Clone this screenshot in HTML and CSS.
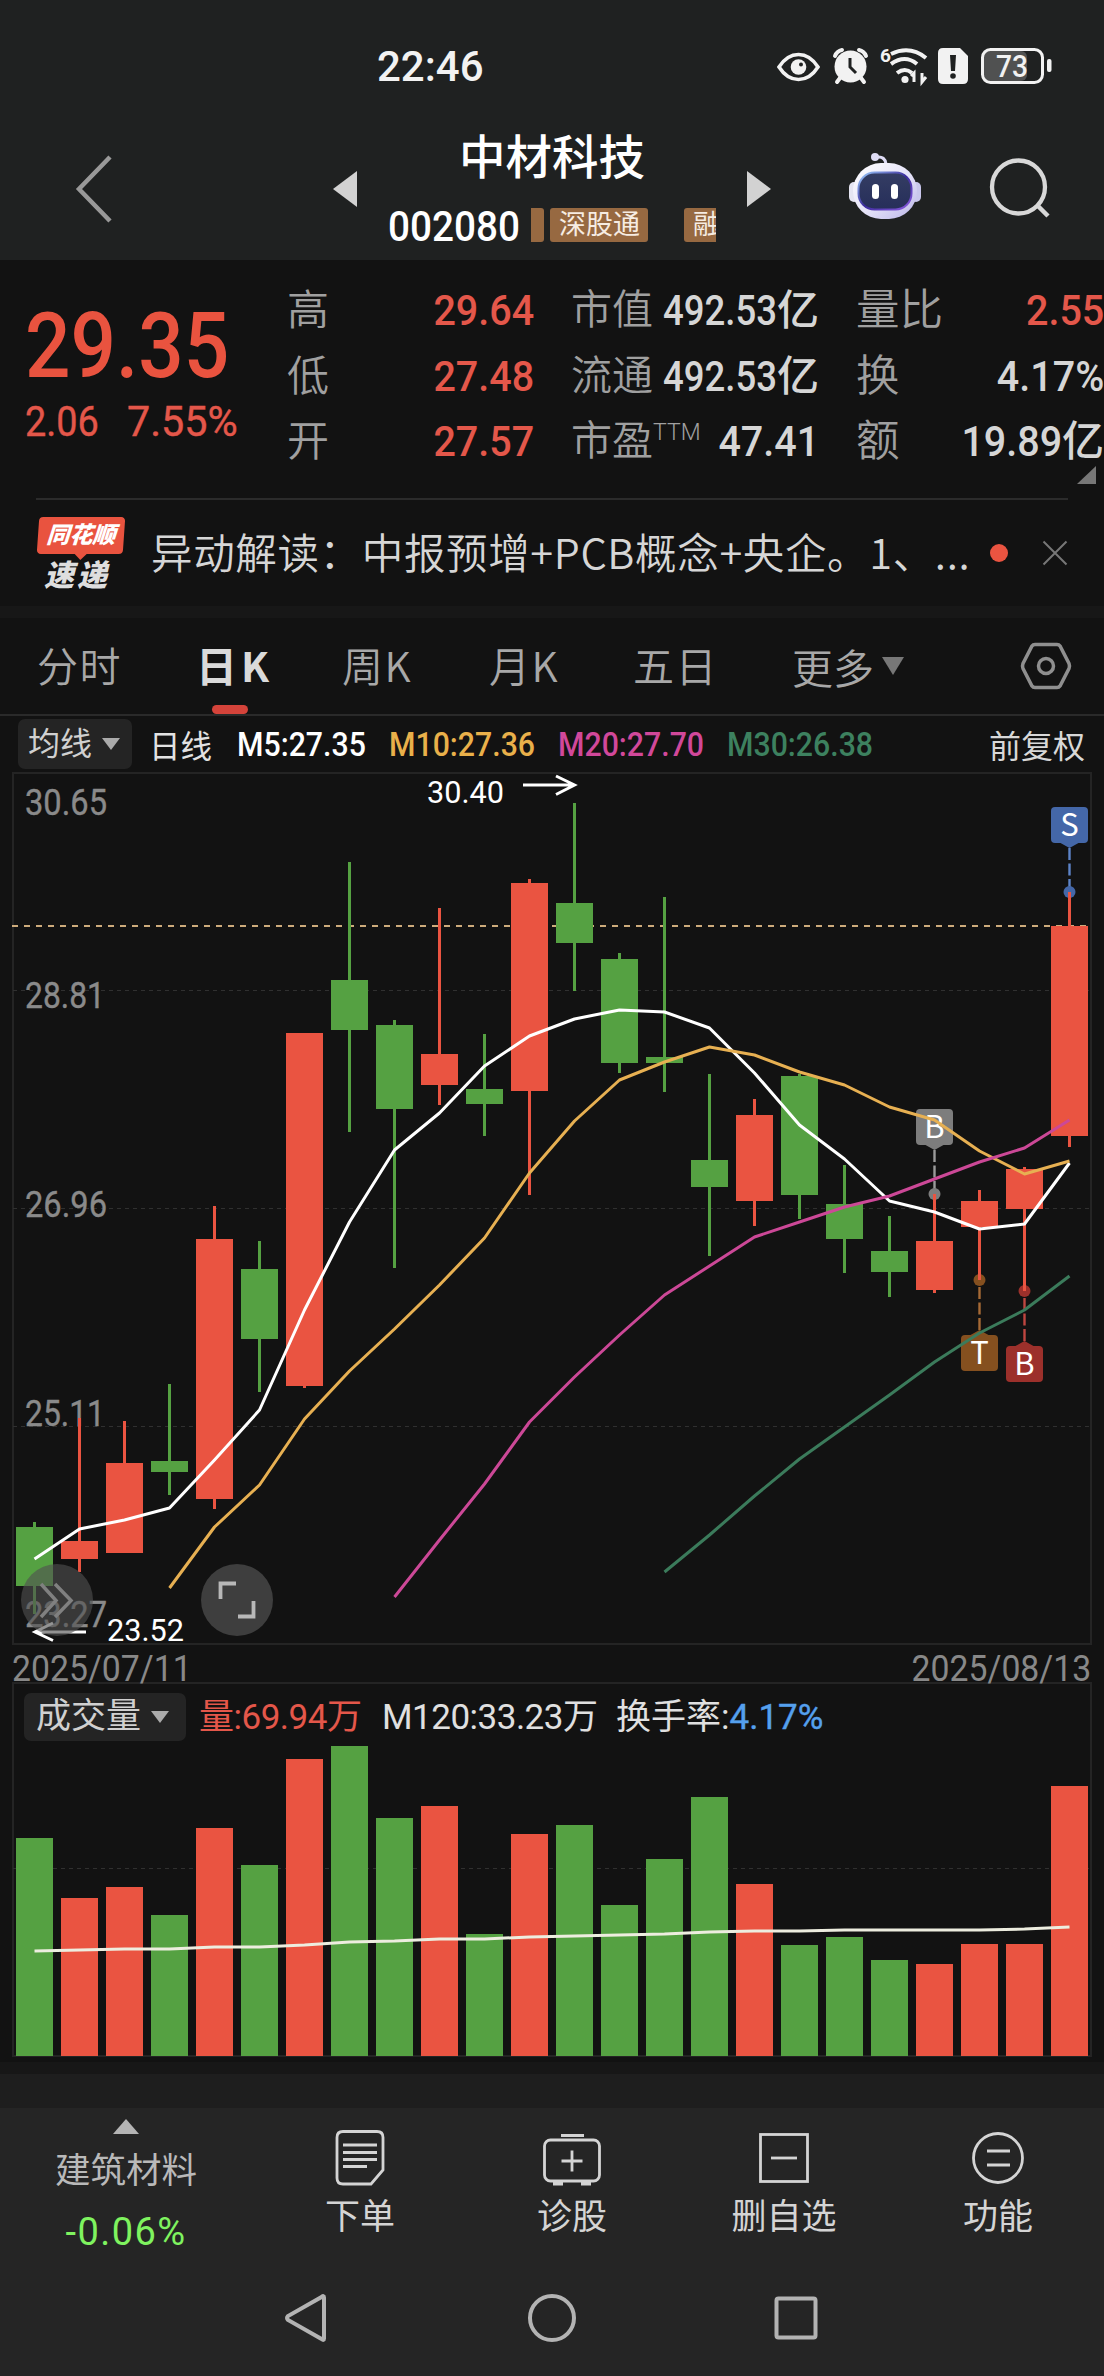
FILE: index.html
```html
<!DOCTYPE html>
<html lang="zh-CN">
<head>
<meta charset="utf-8">
<title>中材科技 002080</title>
<link rel="stylesheet" href="styles.css">
</head>
<body>
<header class="top">
  <div class="status">
    <time class="clock">22:46</time>
    <svg class="status-icons" width="278" height="44" viewBox="774 44 278 44">
      <path d="M779 67Q787 54.500 798.500 54.500T818 67Q810 79.500 798.500 79.500T779 67Z" fill="none" stroke="#f2f2f2" stroke-width="3.600"/>
      <circle cx="798.500" cy="67" r="7.800" fill="#f2f2f2"/><circle cx="801" cy="64.500" r="2" fill="#1f2121"/>
      <g stroke="#f2f2f2" stroke-width="4" stroke-linecap="round" fill="none"><path d="M840 78l-3 4M861 78l3 4M835 56q2-5 7-6M866 56q-2-5-7-6"/></g>
      <circle cx="850.500" cy="66.500" r="16" fill="#f2f2f2"/><path d="M850 58v9l6 6" fill="none" stroke="#1f2121" stroke-width="3"/>
      <text x="880" y="62" class="tiny">6</text>
      <g fill="none" stroke="#f2f2f2" stroke-width="4"><path d="M891 54q19-9 35 4M891 64q14-10 26 0M897 73q8-6 15 0"/><path d="M914 82v-9l-3 3M922 73v9l4-5" stroke-width="3"/></g>
      <circle cx="905" cy="79.500" r="3.600" fill="#f2f2f2"/>
      <path d="M943 48h17l8 8v23q0 5-5 5h-20q-5 0-5-5V53q0-5 5-5z" fill="#f2f2f2"/>
      <path d="M950 55h6l-1 16h-4z" fill="#1f2121"/><circle cx="953" cy="76" r="2.800" fill="#1f2121"/>
      <rect x="984" y="51" width="43" height="30" rx="6" fill="#505151"/>
      <rect x="982.500" y="49.500" width="60" height="33" rx="8" fill="none" stroke="#f2f2f2" stroke-width="3"/>
      <rect x="1047" y="59" width="4.500" height="13" rx="2" fill="#f2f2f2"/>
      <text x="996" y="77" class="batt" textLength="32" lengthAdjust="spacingAndGlyphs">73</text>
    </svg>
  </div>
  <div class="titlebar">
    <svg class="back" width="44" height="70" viewBox="0 0 44 70"><path d="M38 3L7 35l31 32" fill="none" stroke="#999" stroke-width="4.500"/></svg>
    <i class="prev"></i>
    <div class="stock">
      <h1>中材科技</h1>
      <div class="sub"><span class="code n">002080</span><div class="tags"><span class="tag stub"></span><span class="tag">深股通</span><span class="tag cut">融</span></div></div>
    </div>
    <i class="next"></i>
    <svg class="robot" width="76" height="70" viewBox="847 151 76 70">
      <defs>
        <linearGradient id="shell" x1="0" y1="0" x2="1" y2="1"><stop offset="0" stop-color="#fff"/><stop offset=".55" stop-color="#e4e2f8"/><stop offset="1" stop-color="#b9b4e8"/></linearGradient>
        <linearGradient id="face" x1="0" y1="0" x2="0" y2="1"><stop offset="0" stop-color="#343d63"/><stop offset="1" stop-color="#262e5a"/></linearGradient>
        <linearGradient id="rim" x1="0" y1="0" x2="1" y2="1"><stop offset="0" stop-color="#9fd0ff"/><stop offset=".5" stop-color="#3a2a9c"/><stop offset="1" stop-color="#8b5be0"/></linearGradient>
      </defs>
      <circle cx="875" cy="157" r="4" fill="#dedcf5"/><path d="M877 157q8-1 9 7" fill="none" stroke="#dedcf5" stroke-width="3"/>
      <rect x="849" y="182" width="10" height="20" rx="5" fill="#e5e5f2"/><rect x="911" y="182" width="10" height="20" rx="5" fill="#c9c7ec"/>
      <rect x="853" y="163" width="64" height="56" rx="28" fill="url(#shell)"/>
      <rect x="858.500" y="172.500" width="53" height="37" rx="16" fill="url(#face)" stroke="url(#rim)" stroke-width="2"/>
      <rect x="872" y="184" width="7" height="15" rx="3.500" fill="#fff"/><rect x="891" y="184" width="7" height="15" rx="3.500" fill="#fff"/>
    </svg>
    <svg class="search" width="64" height="64" viewBox="0 0 64 64"><circle cx="30.500" cy="30" r="26.500" fill="none" stroke="#d8d8d8" stroke-width="4.300"/><path d="M49 48l11 11" stroke="#d8d8d8" stroke-width="4.500"/></svg>
  </div>
</header>

<section class="quote">
  <div class="last">
    <strong class="n price">29.35</strong>
    <div class="chg"><span class="n">2.06</span><span class="n pct">7.55%</span></div>
  </div>
  <dl class="col c1">
    <div><dt>高</dt><dd class="up"><span class="n">29.64</span></dd></div>
    <div><dt>低</dt><dd class="up"><span class="n">27.48</span></dd></div>
    <div><dt>开</dt><dd class="up"><span class="n">27.57</span></dd></div>
  </dl>
  <dl class="col c2">
    <div><dt>市值</dt><dd><span class="n long">492.53</span>亿</dd></div>
    <div><dt>流通</dt><dd><span class="n long">492.53</span>亿</dd></div>
    <div><dt>市盈<sup>TTM</sup></dt><dd><span class="n">47.41</span></dd></div>
  </dl>
  <dl class="col c3">
    <div><dt>量比</dt><dd class="up"><span class="n">2.55</span></dd></div>
    <div><dt>换</dt><dd><span class="n">4.17%</span></dd></div>
    <div><dt>额</dt><dd><span class="n">19.89</span>亿</dd></div>
  </dl>
  <i class="corner"></i>
</section>

<section class="news">
  <div class="brand"><span class="flag">同花顺</span><span class="express">速递</span></div>
  <p>异动解读：中报预增+PCB概念+央企。1、<span class="dots">...</span></p>
  <i class="dot"></i>
  <svg class="close" width="26" height="26" viewBox="0 0 26 26"><path d="M1.500 1.500l23 23M24.500 1.500l-23 23" stroke="#777" stroke-width="2"/></svg>
</section>

<nav class="tabs">
  <a>分时</a><a class="on">日K</a><a>周K</a><a>月K</a><a>五日</a><a class="more">更多<i class="caret big"></i></a>
  <svg class="gear" width="52" height="50" viewBox="0 0 52 50"><g fill="none" stroke="#8f8f8f" stroke-width="3.500"><path d="M15 3.500h22q2 0 3 1.500l9 17.500q1 2.500 0 5L40 45q-1 1.500-3 1.500H15q-2 0-3-1.500L3 27.500q-1-2.500 0-5L12 5q1-1.500 3-1.500z"/><circle cx="26" cy="25" r="7.500"/></g></svg>
</nav>

<div class="legend">
  <span class="btn">均线<i class="caret"></i></span>
  <span class="daily">日线</span>
  <span class="n m5">M5:27.35</span><span class="n m10">M10:27.36</span><span class="n m20">M20:27.70</span><span class="n m30">M30:26.38</span>
  <span class="adj">前复权</span>
</div>

<main class="charts">
  <svg id="kline" class="kline" width="1104" height="912" viewBox="0 770 1104 912">
    <g class="frame"><rect x="13" y="773" width="1078" height="871"/></g>
    <path class="grid" d="M13 990.500H1091M13 1208.500H1091M13 1426.500H1091"/>
    <path class="now" d="M12 926H1088"/>
    <g class="axis">
      <text x="25" y="815" textLength="82" lengthAdjust="spacingAndGlyphs">30.65</text>
      <text x="25" y="1008" textLength="80" lengthAdjust="spacingAndGlyphs">28.81</text>
      <text x="25" y="1217" textLength="82" lengthAdjust="spacingAndGlyphs">26.96</text>
      <text x="25" y="1426" textLength="80" lengthAdjust="spacingAndGlyphs">25.11</text>
      <text x="25" y="1627" textLength="82" lengthAdjust="spacingAndGlyphs">23.27</text>
    </g>
    <g id="marks"></g>
    <g id="candles"></g>
    <g id="averages"></g>
    <g class="extreme">
      <text x="427" y="803" textLength="77" lengthAdjust="spacingAndGlyphs">30.40</text>
      <path d="M523 785H574M556 776L574.500 785L556 794.500"/>
      <text x="107" y="1641" textLength="77" lengthAdjust="spacingAndGlyphs">23.52</text>
      <path d="M35 1632H86M53 1623L35 1632L53 1640.500"/>
    </g>
    <circle cx="57" cy="1600" r="36" fill="#505050" opacity=".62"/>
    <path d="M41 1584l15 16.500l-15 16.500M55 1584l16 16.500l-16 16.500" fill="none" stroke="#808080" stroke-width="3.500"/>
    <circle cx="237" cy="1600" r="36" fill="#3e3e3e"/>
    <path d="M236 1583.500H220.500V1599M238 1616.500H253.500V1601" fill="none" stroke="#b8b8b8" stroke-width="3.800"/>
  </svg>
  <div class="dates"><span class="n">2025/07/11</span><span class="n">2025/08/13</span></div>
  <section class="volume">
    <div class="vol-head">
      <span class="btn">成交量<i class="caret"></i></span><span class="v-red">量:69.94万</span><span class="v-m">M120:33.23万</span><span class="v-turn">换手率:<b>4.17%</b></span>
    </div>
    <svg id="volume" class="bars" width="1104" height="316" viewBox="0 1742 1104 316"><path class="grid" d="M13 1868.500H1091"/></svg>
  </section>
</main>

<div class="gap"></div>

<footer>
  <div class="actions">
    <div class="sector"><i class="tri-up"></i><span>建筑材料</span><b>-0.06%</b></div>
    <div class="act"><svg width="60" height="60" viewBox="0 0 60 60"><path d="M13 3.500h34q6 0 6 6V42l-12 14H13q-6 0-6-6V9.500q0-6 6-6z"/><path d="M13 17h34M13 24.500h34M13 31.500h34M13 38.500h24"/></svg><span>下单</span></div>
    <div class="act"><svg width="60" height="60" viewBox="0 0 60 60"><rect x="2.500" y="12" width="55" height="41" rx="6"/><path d="M19 7.500h23M19.500 33h21M30 22.500v21"/><path d="M11 55.500h10M39 55.500h10" stroke-width="4"/></svg><span>诊股</span></div>
    <div class="act"><svg width="60" height="60" viewBox="0 0 60 60"><rect x="6.500" y="6.500" width="47" height="47"/><path d="M17 30h26"/></svg><span>删自选</span></div>
    <div class="act"><svg width="60" height="60" viewBox="0 0 60 60"><circle cx="30" cy="30" r="24.500"/><path d="M19 23h23M19 37h23"/></svg><span>功能</span></div>
  </div>
  <div class="sysnav">
    <svg width="46" height="54" viewBox="0 0 46 54"><path d="M41 6.500V47.500Q41 50 38.500 48L5 29Q3 27 5 25L38.500 6Q41 4 41 6.500z"/></svg>
    <svg width="52" height="52" viewBox="0 0 52 52"><circle cx="26" cy="26" r="22"/></svg>
    <svg width="48" height="48" viewBox="0 0 48 48"><rect x="4.500" y="4.500" width="39" height="39" rx="2"/></svg>
  </div>
</footer>
<script src="chart.js"></script>
</body>
</html>
```
FILE: styles.css
```css
* { box-sizing: border-box; }
body {
  margin: 0;
  width: 1104px;
  height: 2376px;
  overflow: hidden;
  background: #121212;
  color: #d6d6d6;
  font-family: Roboto, "Noto Sans CJK SC", sans-serif;
}
h1, p, dl, dd { margin: 0; }
i { display: block; flex: none; }
svg { display: block; flex: none; }
.n { display: inline-block; white-space: nowrap; transform: scaleX(.88); transform-origin: left center; }

.top { height: 260px; background: #1f2121; }
.status { height: 122px; display: flex; align-items: flex-start; padding-top: 44px; }
.clock { margin-left: 377px; width: 397px; font-size: 42px; font-weight: 500; line-height: 46px; color: #f2f2f2; }
.tiny { font-size: 19px; font-weight: 700; fill: #f2f2f2; }
.batt { font-size: 31px; font-weight: 500; fill: #f2f2f2; }
.titlebar { height: 138px; display: flex; align-items: flex-start; }
.back { margin: 32px 0 0 72px; }
.prev { margin: 49px 0 0 217px; border: solid transparent; border-width: 18px 24px 18px 0; border-right-color: #d2d2d2; }
.stock { width: 328px; margin: 0 31px; height: 122px; }
.stock h1 { font-size: 46.500px; font-weight: 500; line-height: 72px; height: 76px; text-align: center; color: #fff; }
.sub { display: flex; height: 46px; align-items: center; margin-top: 5px; }
.code { flex: none; width: 153px; margin-right: -10px; font-size: 43px; line-height: 46px; font-weight: 500; color: #fff; transform: scaleX(.9); }
.tags { display: flex; width: 186px; overflow: hidden; margin-top: -3px; }
.tag { flex: none; height: 34px; padding: 0 9px; font-size: 27px; line-height: 34px; color: #f6ece2; background: #976941; border-radius: 3px; width: 98px; white-space: nowrap; }
.tag.stub { width: 13px; padding: 0; margin-right: 6px; border-radius: 0 3px 3px 0; }
.tag.cut { margin-left: 36px; }
.next { margin-top: 49px; border: solid transparent; border-width: 18px 0 18px 24px; border-left-color: #d2d2d2; }
.robot { margin: 29px 0 0 76px; }
.search { margin: 35px 0 0 65px; }

.quote { position: relative; display: flex; height: 239px; }
.last { width: 287px; color: #e9533f; padding: 41px 0 0 25px; }
.price { font-size: 91px; line-height: 90px; font-weight: 500; }
.chg { display: flex; height: 50px; margin-top: 5px; font-size: 43px; line-height: 50px; }
.chg .n { width: 102px; color: #e4574a; -webkit-text-stroke: .4px; }
.chg .pct { transform: scaleX(.96); }
.col { padding-top: 18px; font-size: 42px; }
.col > div { display: flex; justify-content: space-between; height: 65.500px; line-height: 65px; white-space: nowrap; }
.col dt { color: #a0a0a0; font-weight: 350; }
.col dd { font-weight: 500; }
.col dd .n { transform-origin: right center; transform: scaleX(.94); }
.col dd .n.long { transform: scaleX(.87); margin-left: -20px; }
.col .up { color: #e4574a; }
.c1 { width: 247px; }
.c2 { width: 248px; margin-left: 37px; }
.c2 dt { font-size: 41px; }
.c3 { width: 248px; margin-left: 37px; }
.c3 dt { font-size: 43.500px; }
sup { font-size: 23px; line-height: 0; vertical-align: 15px; }
.corner { position: absolute; right: 8px; top: 206px; border: solid transparent; border-width: 0 0 18px 19px; border-bottom-color: #777; }

.news { height: 120px; margin: -1px 36px 0; position: relative; border-top: 2px solid #2b2b2b; display: flex; align-items: center; }
.news::after { content: ""; position: absolute; left: -36px; right: -36px; bottom: 0; height: 12px; background: #171717; }
.brand { width: 115px; align-self: flex-start; padding: 17px 0 0 2px; }
.brand span { display: block; font-weight: 900; white-space: nowrap; }
.flag { position: relative; width: 86px; height: 37px; background: #e9533f; border-radius: 4px; transform: skewX(-4deg); color: #fff; font-size: 23px; line-height: 37px; text-align: center; font-style: italic; }
.flag::after { content: ""; position: absolute; left: 37px; top: 36px; border: solid transparent; border-width: 7px 7px 0; border-top-color: #e9533f; }
.express { margin: 5px 0 0 6px; font-size: 30px; line-height: 34px; letter-spacing: 3px; font-style: italic; color: #dedede; }
.news p { width: 813px; font-size: 41.500px; line-height: 60px; letter-spacing: .65px; white-space: nowrap; font-weight: 350; margin-top: -16px; font-family: "Noto Sans CJK SC", sans-serif; display: flex; justify-content: space-between; }
.dot { width: 18px; height: 18px; border-radius: 50%; background: #ea5441; margin: -12px 0 0 26px; }
.close { margin: -12px 0 0 34px; }

.tabs { display: grid; grid-template-columns: 159px 146px 147px 144px 159px 228px 52px; height: 98px; padding-left: 37px; border-bottom: 2px solid #2a2a2a; align-items: center; font-family: "Noto Sans CJK SC", sans-serif; font-size: 41px; line-height: 93px; color: #a8a8a8; white-space: nowrap; }
.tabs a { height: 96px; font-weight: 350; letter-spacing: 1.500px; }
.tabs .on { position: relative; font-weight: 700; color: #dadada; letter-spacing: 4px; }
.tabs .on::after { content: ""; position: absolute; left: 16px; bottom: 0; width: 36px; height: 9px; border-radius: 5px; background: #d4433a; }
.tabs .more { display: flex; align-items: center; letter-spacing: 0; }
.caret { border: solid transparent; border-width: 12px 9px 0; border-top-color: #aaa; margin-left: 10px; }
.caret.big { border-width: 18px 11px 0; border-top-color: #777; margin-left: 8px; margin-top: -1px; }

.legend { display: flex; align-items: center; height: 54px; padding: 1px 0 0 18px; font-size: 34px; font-weight: 500; color: #fff; }
.btn { flex: none; display: flex; align-items: center; background: #242424; border-radius: 7px; color: #d0d0d0; font-weight: 400; white-space: nowrap; }
.legend .btn { width: 114px; height: 50px; padding-left: 10px; font-size: 32px; line-height: 50px; }
.daily { flex: none; width: 88px; margin-left: 17px; font-size: 31.500px; font-weight: 400; color: #e2e2e2; }
.legend .n { flex: none; width: 169px; transform: scaleX(.89); font-weight: 500; }
.legend .m5 { width: 152px; }
.m10 { color: #e9b04a; }
.m20 { color: #d1489a; }
.m30 { color: #3d815f; }
.legend .m30 { width: 262px; }
.adj { font-size: 32px; font-weight: 400; color: #d8d8d8; white-space: nowrap; }

.frame { fill: none; stroke: #242424; stroke-width: 2; }
.grid { fill: none; stroke: #303030; stroke-width: 1; stroke-dasharray: 4 4; }
.now { stroke: #cdab7c; stroke-width: 1.800; stroke-dasharray: 6 6; }
.axis { font-size: 36.500px; fill: #8a8a8a; stroke: #8a8a8a; stroke-width: .4; }
.extreme text { font-size: 32px; fill: #fff; }
.extreme path { fill: none; stroke: #fff; stroke-width: 3; }
.mark-label { font-family: "Noto Sans CJK SC", sans-serif; font-size: 31px; fill: #fff; text-anchor: middle; }
.line { fill: none; stroke-width: 3; stroke-linejoin: round; }

.kline { margin-bottom: -34px; }
.dates { position: relative; display: flex; justify-content: space-between; height: 34px; padding: 0 13px 0 12px; font-size: 36.500px; line-height: 42px; color: #888; }
.dates .n { transform: scaleX(.925); }
.dates .n:last-child { transform-origin: right center; }
.volume { width: 1080px; height: 375px; margin-left: 12px; border: 2px solid #242424; }
.vol-head { display: flex; align-items: flex-start; height: 58px; padding: 9px 0 0 10px; font-size: 35px; line-height: 49px; white-space: nowrap; }
.vol-head .btn { width: 162px; height: 48px; padding-left: 12px; line-height: 48px; }
.v-red { width: 183px; margin-left: 13px; color: #e4574a; letter-spacing: -.5px; }
.v-m { width: 234px; color: #e0e0e0; letter-spacing: -.5px; }
.v-turn { color: #e0e0e0; }
.v-turn b { font-weight: 400; color: #55a0ee; -webkit-text-stroke: .4px; }
.bars { margin-left: -14px; }

.gap { height: 51px; border-top: 5px solid #121212; background: linear-gradient(#171717 12px, #1e1e1e 12px); }
footer { height: 268px; background: #252525; }
.actions { display: grid; grid-template-columns: 252px 216px 208px 216px 212px; height: 158px; color: #d4d4d4; font-size: 35px; }
.sector { display: flex; flex-direction: column; align-items: center; color: #b9b9b9; font-size: 35.500px; line-height: 40px; padding-top: 11px; }
.tri-up { border: solid transparent; border-width: 0 13px 15px; border-bottom-color: #b4b4b4; margin-bottom: 17px; }
.sector b { font-weight: 400; color: #7ff35f; font-size: 38px; margin-top: 21px; letter-spacing: 1.400px; }
.act { display: flex; flex-direction: column; align-items: center; padding-top: 20px; line-height: 46px; }
.act svg { fill: none; stroke: #d4d4d4; stroke-width: 2.800; }
.act span { margin-top: 7px; }
.sysnav { display: flex; align-items: center; height: 104px; padding-left: 283px; }
.sysnav svg { fill: none; stroke: #b3b3b3; stroke-width: 4; }
.sysnav svg:nth-child(2) { margin-left: 197px; }
.sysnav svg:nth-child(3) { margin-left: 194px; }
```
FILE: chart.js
```js
const NS = 'http://www.w3.org/2000/svg';
const RED = '#ea5441', GREEN = '#55a142';
const x = i => 34.5 + 45 * i;

function add(parent, tag, attrs, text) {
  const el = document.createElementNS(NS, tag);
  for (const k in attrs) el.setAttribute(k, attrs[k]);
  if (text) el.textContent = text;
  parent.appendChild(el);
}

// direction, wick top, body top, body bottom, wick bottom, volume bar top
const days = [
  [0, 1522, 1527, 1586, 1614, 1838], [1, 1418, 1541, 1559, 1572, 1898],
  [1, 1421, 1463, 1553, 1553, 1887], [0, 1384, 1461, 1472, 1495, 1915],
  [1, 1206, 1239, 1499, 1509, 1828], [0, 1241, 1269, 1339, 1392, 1865],
  [1, 1033, 1033, 1386, 1388, 1759], [0, 862, 980, 1030, 1132, 1746],
  [0, 1020, 1025, 1109, 1268, 1818], [1, 908, 1054, 1085, 1105, 1806],
  [0, 1034, 1089, 1104, 1136, 1934], [1, 879, 883, 1091, 1195, 1834],
  [0, 803, 903, 943, 991, 1825], [0, 953, 959, 1063, 1073, 1905],
  [0, 897, 1057, 1063, 1092, 1859], [0, 1074, 1160, 1187, 1256, 1797],
  [1, 1099, 1115, 1201, 1226, 1884], [0, 1074, 1076, 1195, 1219, 1945],
  [0, 1165, 1204, 1239, 1273, 1937], [0, 1216, 1251, 1272, 1297, 1960],
  [1, 1194, 1241, 1290, 1293, 1964], [1, 1190, 1201, 1227, 1280, 1944],
  [1, 1167, 1169, 1209, 1291, 1944], [1, 892, 926, 1136, 1147, 1786]
];

const marks = document.getElementById('marks');
// index, letter, colour, dash colour, box top, dot y
[[23, 'S', '#4467a8', '#5d84c8', 807, 892], [20, 'B', '#7d7d7d', '#9a9a9a', 1109, 1194],
 [21, 'T', '#85501f', '#a66a35', 1335, 1280], [22, 'B', '#9c302b', '#bf4640', 1346, 1291]
].forEach(([i, letter, fill, dash, top, dot]) => {
  const c = x(i), below = top > dot;
  const edge = below ? top : top + 36;
  const tip = below ? top - 5 : top + 41;
  add(marks, 'rect', { x: c - 18.5, y: top, width: 37, height: 36, rx: 4, fill });
  add(marks, 'path', { d: `M${c - 9} ${edge}L${c} ${tip}L${c + 9} ${edge}z`, fill });
  add(marks, 'path', { d: `M${c} ${tip}V${dot}`, stroke: dash, 'stroke-width': 2.4, 'stroke-dasharray': '12 3.5' });
  add(marks, 'circle', { cx: c, cy: dot, r: 6, fill });
  add(marks, 'text', { x: c, y: top + 29, class: 'mark-label' }, letter);
});

const candles = document.getElementById('candles');
const volume = document.getElementById('volume');
days.forEach(([up, high, top, bottom, low, vol], i) => {
  const fill = up ? RED : GREEN;
  add(candles, 'rect', { x: x(i) - 1.5, y: high, width: 3, height: low - high, fill });
  add(candles, 'rect', { x: x(i) - 18.5, y: top, width: 37, height: bottom - top, fill });
  add(volume, 'rect', { x: x(i) - 18.5, y: vol, width: 37, height: 2056 - vol, fill });
});

function line(parent, start, ys, stroke, width) {
  const points = ys.map((y, k) => `${x(start + k)},${y}`).join(' ');
  add(parent, 'polyline', { points, stroke, class: 'line', style: width ? `stroke-width:${width}` : '' });
}
const averages = document.getElementById('averages');
line(averages, 0, [1559, 1529, 1520, 1508, 1460, 1410, 1310, 1222, 1150, 1113, 1066, 1036, 1019, 1010, 1012, 1028, 1073, 1125, 1159, 1201, 1212, 1229, 1224, 1163], '#fff');
line(averages, 3, [1588, 1527, 1485, 1419, 1371, 1329, 1285, 1238, 1173, 1121, 1080, 1062, 1047, 1055, 1072, 1085, 1107, 1120, 1151, 1174, 1161], '#e7b052');
line(averages, 8, [1597, 1540, 1484, 1422, 1377, 1335, 1295, 1266, 1237, 1222, 1207, 1196, 1179, 1162, 1148, 1120], '#cc4897');
line(averages, 14, [1572, 1535, 1496, 1459, 1427, 1395, 1362, 1333, 1310, 1276], '#3b7b5b');
line(volume, 0, [1951, 1950, 1949, 1949, 1947, 1947, 1945, 1942, 1941, 1939, 1939, 1937, 1936, 1935, 1934, 1932, 1931, 1931, 1930, 1930, 1930, 1930, 1929, 1927], '#ededdf', 3);
```
